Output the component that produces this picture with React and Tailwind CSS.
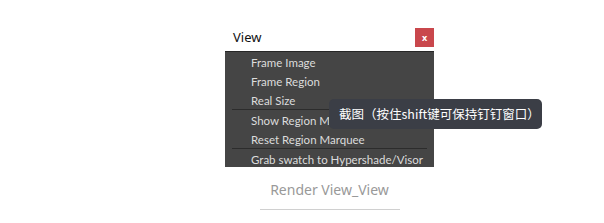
export default function App() {
  const items = [
    { label: 'Frame Image' },
    { label: 'Frame Region' },
    { label: 'Real Size', sep: true },
    { label: 'Show Region Marquee' },
    { label: 'Reset Region Marquee', sep: true },
    { label: 'Grab swatch to Hypershade/Visor' },
  ]

  return (
    <div className="relative w-[604px] h-[223px] bg-white overflow-hidden font-['Noto_Sans','Noto_Sans_CJK_SC',sans-serif]">
      <div className="ml-[225px] w-[209px] pt-[28px]">
        {/* title bar */}
        <div className="flex items-center justify-between h-[19px]">
          <span className="pl-[8px] text-[13px] text-[#111]">View</span>
          <span className="flex items-center justify-center w-[19px] h-[19px] bg-[#c9474c] text-white text-[9px] font-bold leading-none">x</span>
        </div>

        {/* menu */}
        <div className="mt-[4px] h-[116px] overflow-hidden bg-[#454545] border-t border-[#262626]">
          {items.map((item) => (
            <div key={item.label}>
              <div className="flex items-center h-[19px] pt-[2px] pl-[26px] text-[11.5px] text-[#dcdcdc] whitespace-nowrap font-['Lato',sans-serif]">
                {item.label}
              </div>
              {item.sep && <div className="mx-[7px] h-px bg-[#2c2c2c]" />}
            </div>
          ))}
        </div>

        <div className="mt-[12px] text-center text-[14px] text-[#999]">Render View_View</div>
        <div className="mx-auto mt-[9px] w-[140px] h-px bg-[#d0d0d0]" />
      </div>

      {/* tooltip */}
      <div className="absolute left-[329px] top-[99px] w-[213px] h-[30px] flex items-center pl-[10px] rounded-[5px] bg-[#3b3e46] text-[12.5px] text-white whitespace-nowrap font-['Noto_Sans_CJK_SC',sans-serif]">
        截图（按住shift键可保持钉钉窗口）
      </div>
    </div>
  )
}
